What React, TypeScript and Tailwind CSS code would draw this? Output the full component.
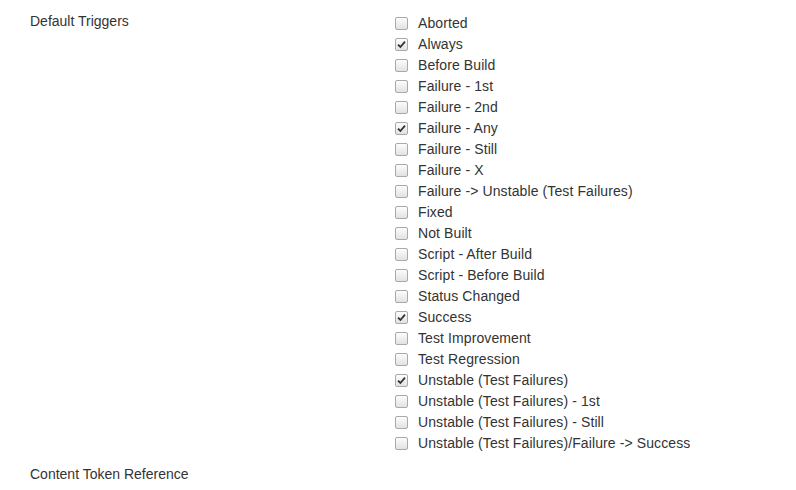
import React from 'react';

const triggers: { name: string; checked: boolean }[] = [
  { name: 'Aborted', checked: false },
  { name: 'Always', checked: true },
  { name: 'Before Build', checked: false },
  { name: 'Failure - 1st', checked: false },
  { name: 'Failure - 2nd', checked: false },
  { name: 'Failure - Any', checked: true },
  { name: 'Failure - Still', checked: false },
  { name: 'Failure - X', checked: false },
  { name: 'Failure -> Unstable (Test Failures)', checked: false },
  { name: 'Fixed', checked: false },
  { name: 'Not Built', checked: false },
  { name: 'Script - After Build', checked: false },
  { name: 'Script - Before Build', checked: false },
  { name: 'Status Changed', checked: false },
  { name: 'Success', checked: true },
  { name: 'Test Improvement', checked: false },
  { name: 'Test Regression', checked: false },
  { name: 'Unstable (Test Failures)', checked: true },
  { name: 'Unstable (Test Failures) - 1st', checked: false },
  { name: 'Unstable (Test Failures) - Still', checked: false },
  { name: 'Unstable (Test Failures)/Failure -> Success', checked: false },
];

const Box = ({ checked }: { checked: boolean }) => (
  <span className="w-[13px] h-[13px] rounded-[2px] border border-[#a9a9a9] bg-gradient-to-b from-[#fdfdfd] to-[#e2e2e2] flex items-center justify-center shrink-0">
    {checked && (
      <svg width="9" height="9" viewBox="0 0 9 9">
        <path d="M1 4.6 L3.4 7 L8 1.6" fill="none" stroke="#333" strokeWidth="1.8" />
      </svg>
    )}
  </span>
);

export default function App() {
  return (
    <div className="w-[796px] h-[490px] bg-white text-[#333] text-[14px] font-['Liberation_Sans',Arial,sans-serif] overflow-hidden">
      <div className="grid grid-cols-[365px_1fr] pl-[30px] pt-[11px]">
        <div className="leading-[20px]">Default Triggers</div>
        <div className="flex flex-col mt-[2px]">
          {triggers.map((t) => (
            <label key={t.name} className="flex items-center h-[21px] gap-[10px] tracking-[0.1px]">
              <Box checked={t.checked} />
              <span>{t.name}</span>
            </label>
          ))}
        </div>
        <div className="mt-[10px] leading-[20px]">Content Token Reference</div>
      </div>
    </div>
  );
}
